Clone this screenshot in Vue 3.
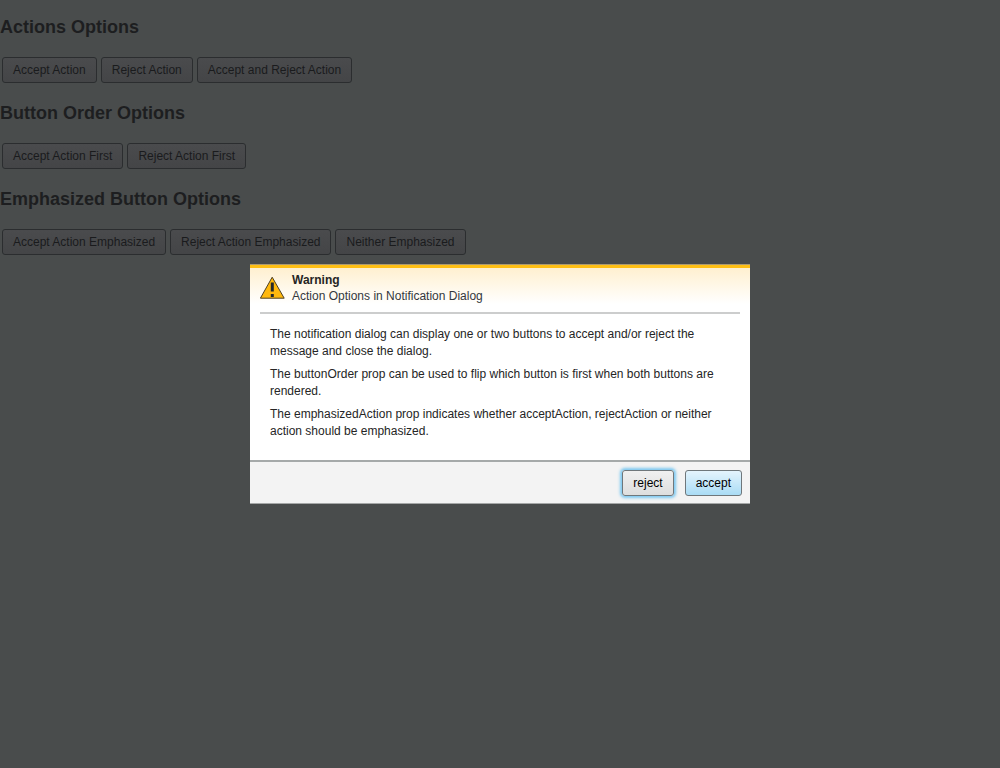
<script setup>
const groups = [
  { title: 'Actions Options', actions: ['Accept Action', 'Reject Action', 'Accept and Reject Action'] },
  { title: 'Button Order Options', actions: ['Accept Action First', 'Reject Action First'] },
  { title: 'Emphasized Button Options', actions: ['Accept Action Emphasized', 'Reject Action Emphasized', 'Neither Emphasized'] }
]
const paragraphs = [
  'The notification dialog can display one or two buttons to accept and/or reject the message and close the dialog.',
  'The buttonOrder prop can be used to flip which button is first when both buttons are rendered.',
  'The emphasizedAction prop indicates whether acceptAction, rejectAction or neither action should be emphasized.'
]
</script>

<template>
  <main class="page">
    <section v-for="group in groups" :key="group.title" class="group">
      <h2>{{ group.title }}</h2>
      <div class="row">
        <button v-for="action in group.actions" :key="action" type="button" class="option">{{ action }}</button>
      </div>
    </section>
  </main>
  <div class="overlay">
    <div class="dialog" role="dialog" aria-modal="true" aria-labelledby="dialog-title">
      <header class="header">
        <svg class="icon" viewBox="0 0 25 24" aria-hidden="true">
          <path d="M12.2 1.2 L24.2 22.2 H0.4 Z" fill="#ffb80d" stroke="#4f4124" stroke-width="1" stroke-linejoin="round" />
          <path d="M10.8 6.5 h3 v9 h-3 Z M10.8 18 h3 v3 h-3 Z" fill="#25282a" />
        </svg>
        <div class="titles">
          <strong id="dialog-title">Warning</strong>
          <span>Action Options in Notification Dialog</span>
        </div>
      </header>
      <div class="body">
        <p v-for="text in paragraphs" :key="text">{{ text }}</p>
      </div>
      <footer class="footer">
        <button type="button" class="action focused">reject</button>
        <button type="button" class="action emphasized">accept</button>
      </footer>
    </div>
  </div>
</template>

<style>
body {
  background: #494c4c;
}
</style>

<style scoped>
.page,
.overlay,
button {
  font-family: "Liberation Sans", Arial, sans-serif;
  font-size: 12px;
}
.page {
  color: #1d1e20;
}
.group {
  padding-top: 15px;
  margin-bottom: 3px;
}
h2 {
  margin: 0 0 18px;
  font-size: 18px;
  line-height: 24px;
}
.row {
  display: flex;
  flex-wrap: wrap;
  gap: 4px;
  padding: 0 2px;
}
button {
  box-sizing: border-box;
  margin: 0;
  padding: 0 10px;
  height: 26px;
  line-height: 16px;
  border-radius: 3px;
}
.option {
  border: 1px solid #2b2d2f;
  background: linear-gradient(#4a4b4d, #444547);
  color: #1a1b1d;
}
.overlay {
  position: fixed;
  inset: 0;
  display: flex;
  align-items: center;
  justify-content: center;
}
.dialog {
  box-sizing: border-box;
  width: 500px;
  max-width: 100%;
  border-top: 1px solid #ad9a70;
  border-bottom: 1px solid #a5a7a7;
  background: #fff;
  color: #252525;
}
.header {
  display: flex;
  gap: 7px;
  margin-bottom: 12px;
  padding: 4px 10px 10px;
  border-top: 3px solid #ffbf14;
  background: linear-gradient(#fff0d0, #fff 36px);
  position: relative;
}
.header::after {
  content: "";
  position: absolute;
  left: 10px;
  right: 10px;
  bottom: 0;
  height: 2px;
  background: #cccdcd;
}
.icon {
  width: 25px;
  height: 24px;
  margin-top: 4px;
}
.titles {
  display: flex;
  flex-direction: column;
  line-height: 16px;
}
.titles span {
  color: #34383c;
}
.body {
  padding: 0 20px 20px;
  line-height: 17px;
}
p {
  margin: 0 0 6px;
}
p:last-child {
  margin-bottom: 0;
}
.footer {
  display: flex;
  justify-content: flex-end;
  gap: 11px;
  padding: 8px 8px 7px;
  border-top: 2px solid #a5a9a9;
  background: #f3f3f3;
}
.action {
  border: 1px solid #6f777b;
  background: linear-gradient(#f0f0f0, #dedede);
  color: #000;
}
.emphasized {
  background: linear-gradient(#e4f4fd, #aadcf5);
}
.focused {
  outline: none;
  box-shadow: 0 0 3px 2px #7cc8f0;
}
</style>
